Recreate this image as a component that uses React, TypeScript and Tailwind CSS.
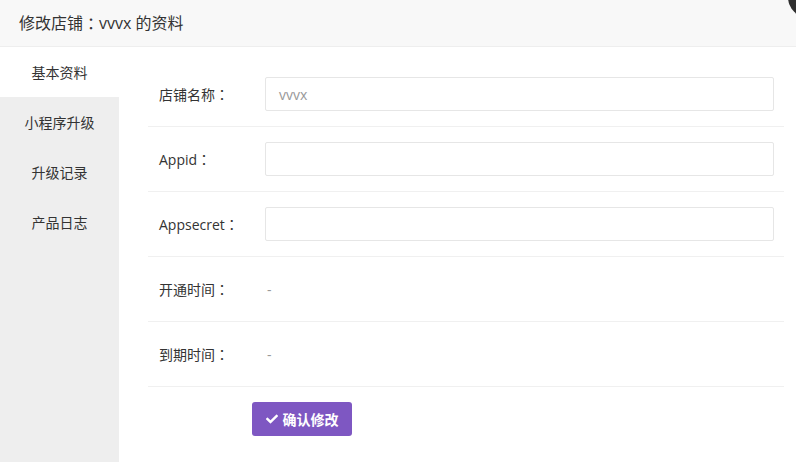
import { FaCheck } from "react-icons/fa";

const tabs = ["基本资料", "小程序升级", "升级记录", "产品日志"];

const fields = [
  { label: "店铺名称", type: "input", value: "vvvx" },
  { label: "Appid", type: "input", value: "" },
  { label: "Appsecret", type: "input", value: "" },
  { label: "开通时间", type: "text", value: "-" },
  { label: "到期时间", type: "text", value: "-" },
];

// full-width colon, centred in its cell as in the original font
function Colon() {
  return (
    <span style={{ fontFamily: '"Noto Sans CJK JP", sans-serif' }}>：</span>
  );
}

export default function App() {
  return (
    <div
      className="relative w-[796px] h-[462px] overflow-hidden bg-white text-[#333]"
      style={{ fontFamily: '"Open Sans", "Noto Sans CJK SC", sans-serif' }}
    >
      {/* layer close button, mostly offscreen */}
      <div className="absolute left-[788px] top-[-24px] w-[42px] h-[42px] rounded-full bg-[#2f2f2f]" />

      {/* Title bar */}
      <div className="h-[47px] bg-[#f8f8f8] border-b border-[#eeeeee] flex items-center pl-[19px] text-[16px] text-[#333]">
        修改店铺<Colon />vvvx 的资料
      </div>

      <div className="flex h-[415px]">
        {/* Side tabs */}
        <div className="w-[119px] bg-[#eeeeee] flex flex-col">
          {tabs.map((t, i) => (
            <div
              key={t}
              className={`h-[50px] flex items-center justify-center text-[14px] text-[#333] ${
                i === 0 ? "bg-white" : ""
              }`}
            >
              {t}
            </div>
          ))}
        </div>

        {/* Form */}
        <div className="flex-1 pl-[29px] pr-[12px] pt-[15px]">
          {fields.map((f) => (
            <div
              key={f.label}
              className="h-[65px] flex items-center border-b border-[#f0f0f0]"
            >
              <div className="w-[117px] pl-[11px] text-[14px] text-[#333]">
                {f.label}
                <Colon />
              </div>
              {f.type === "input" ? (
                <div className="w-[509px] h-[34px] border border-[#e6e6e6] rounded-[2px] flex items-center pl-[13px] text-[14px] text-[#999]">
                  {f.value}
                </div>
              ) : (
                <div className="pl-[2px] text-[14px] text-[#999]">{f.value}</div>
              )}
            </div>
          ))}

          <div className="pt-[15px] pl-[104px]">
            <button className="h-[34px] w-[100px] rounded-[3px] bg-[#7e57c2] text-white text-[14px] font-bold flex items-center justify-center gap-[5px]">
              <FaCheck className="w-[12px] h-[12px]" />
              确认修改
            </button>
          </div>
        </div>
      </div>
    </div>
  );
}
